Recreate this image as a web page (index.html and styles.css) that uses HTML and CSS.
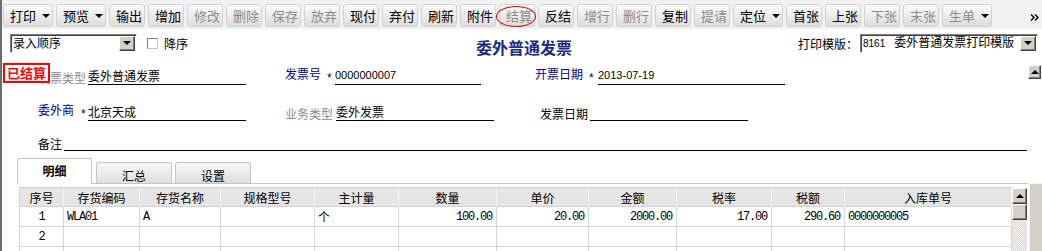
FILE: index.html
```html
<!DOCTYPE html>
<html lang="zh-CN">
<head>
  <meta charset="UTF-8">
  <title>委外普通发票</title>
  <link rel="stylesheet" href="styles.css">
</head>
<body>

<div class="app">
  <div class="toolbar">
    <button class="tb drop">打印<i class="caret"></i></button>
    <button class="tb drop">预览<i class="caret"></i></button>
    <button class="tb">输出</button>
    <button class="tb">增加</button>
    <button class="tb off">修改</button>
    <button class="tb off">删除</button>
    <button class="tb off">保存</button>
    <button class="tb off">放弃</button>
    <button class="tb">现付</button>
    <button class="tb">弃付</button>
    <button class="tb">刷新</button>
    <button class="tb">附件</button>
    <button class="tb off marked">结算</button>
    <button class="tb">反结</button>
    <button class="tb off">增行</button>
    <button class="tb off">删行</button>
    <button class="tb">复制</button>
    <button class="tb off">提请</button>
    <button class="tb drop">定位<i class="caret"></i></button>
    <button class="tb">首张</button>
    <button class="tb">上张</button>
    <button class="tb off">下张</button>
    <button class="tb off">末张</button>
    <button class="tb drop off">生单<i class="caret"></i></button>
    <span class="more">
      <svg width="10" height="7" viewBox="0 0 10 7"><path d="M1 0.5 L4 3.5 L1 6.5 M5 0.5 L8 3.5 L5 6.5" fill="none" stroke="#000" stroke-width="1.4"/></svg>
    </span>
  </div>

  <div class="head-row">
    <div class="head-left">
      <div class="combo combo-sort">
        <span class="combo-text">录入顺序</span>
        <span class="combo-btn"><i class="caret"></i></span>
      </div>
      <label class="chk"><span class="box"></span>降序</label>
    </div>
    <h1 class="title">委外普通发票</h1>
    <div class="head-right">
      <span>打印模版：</span>
      <div class="combo combo-tpl">
        <span class="combo-text"><span class="code">8161</span>委外普通发票打印模版</span>
        <span class="combo-btn"><i class="caret"></i></span>
      </div>
    </div>
  </div>

  <div class="stamp">已结算</div>

  <div class="frow r1">
    <div class="grp g247">
      <span class="lbl gray lw50">发票类型</span>
      <span class="val vw158">委外普通发票</span>
    </div>
    <div class="grp g250">
      <span class="lbl lw50">发票号<i class="star">*</i></span>
      <span class="val vw146 num">0000000007</span>
    </div>
    <div class="grp">
      <span class="lbl lw63">开票日期<i class="star">*</i></span>
      <span class="val vw187 num">2013-07-19</span>
    </div>
    <span class="sbtn up-top"><i class="caret-up"></i></span>
  </div>

  <div class="frow r2">
    <div class="grp g247">
      <span class="lbl lw50">委外商<i class="star star-wide">*</i></span>
      <span class="val vw158">北京天成</span>
    </div>
    <div class="grp g255">
      <span class="lbl gray lw51">业务类型</span>
      <span class="val vw158">委外发票</span>
    </div>
    <div class="grp">
      <span class="lbl plain lw50">发票日期</span>
      <span class="val vw158"></span>
    </div>
  </div>

  <div class="frow r3">
    <div class="grp">
      <span class="lbl plain lw26">备注</span>
      <span class="val vw963"></span>
    </div>
  </div>

  <div class="bottom">
    <div class="main">
      <div class="tabs">
        <span class="tab on">明细</span>
        <span class="tab">汇总</span>
        <span class="tab">设置</span>
      </div>
      <div class="grid-wrap">
        <table class="grid">
          <colgroup>
            <col class="c-no"><col class="c-code"><col class="c-name"><col class="c-spec">
            <col class="c-unit"><col class="c-qty"><col class="c-price"><col class="c-amt">
            <col class="c-rate"><col class="c-tax"><col class="c-in">
          </colgroup>
          <thead>
            <tr>
              <th>序号</th><th>存货编码</th><th>存货名称</th><th>规格型号</th><th>主计量</th>
              <th>数量</th><th>单价</th><th>金额</th><th>税率</th><th>税额</th><th>入库单号</th>
            </tr>
          </thead>
          <tbody>
            <tr>
              <td class="ctr">1</td><td>WLA01</td><td>A</td><td></td><td class="cjk">个</td>
              <td class="rt">100.00</td><td class="rt">20.00</td><td class="rt">2000.00</td>
              <td class="rt">17.00</td><td class="rt">290.60</td><td>0000000005</td>
            </tr>
            <tr>
              <td class="ctr">2</td><td></td><td></td><td></td><td></td>
              <td></td><td></td><td></td><td></td><td></td><td></td>
            </tr>
            <tr>
              <td></td><td></td><td></td><td></td><td></td>
              <td></td><td></td><td></td><td></td><td></td><td></td>
            </tr>
          </tbody>
        </table>
        <div class="vscroll">
          <span class="sbtn vs-up"><i class="caret-up"></i></span>
          <span class="sbtn vs-thumb"></span>
          <span class="vs-track"></span>
        </div>
      </div>
    </div>
    <div class="outer-scroll"></div>
  </div>
</div>

</body>
</html>
```

FILE: styles.css
```css
* {
  box-sizing: border-box;
}

body {
  margin: 0;
  width: 1042px;
  height: 251px;
  overflow: hidden;
  background: #fff;
  font-family: "Noto Sans CJK SC", "Liberation Sans", sans-serif;
  font-size: 12px;
  color: #000;
}

.app {
  position: relative;
  height: 251px;
  overflow: hidden;
  border-left: 2px solid #6e6e6e;
}

/* toolbar */
.toolbar {
  display: flex;
  gap: 3px;
  height: 29px;
  padding: 4px 0 2px 1px;
  background: #f1f1f1;
}

.tb {
  position: relative;
  display: flex;
  align-items: center;
  width: 36px;
  height: 23px;
  padding: 0 0 0 6px;
  font-family: "Noto Sans CJK SC", sans-serif;
  font-size: 13px;
  color: #000;
  background: linear-gradient(#fbfbfb, #e9e9e9 60%, #dcdcdc);
  border: 1px solid #d2d2d2;
  border-radius: 3px;
}

.tb.drop {
  width: 50px;
}

.tb.off {
  color: #8c8c8c;
}

.tb.marked::after {
  content: "";
  position: absolute;
  left: -4px;
  right: -2px;
  top: 1px;
  bottom: -1px;
  border: 1.5px solid #e60000;
  border-radius: 50%;
}

.caret {
  display: inline-block;
  width: 0;
  height: 0;
  border-left: 4px solid transparent;
  border-right: 4px solid transparent;
  border-top: 4px solid #000;
}

.tb .caret {
  margin-left: 6px;
}

.more {
  margin-left: auto;
  margin-right: 2px;
  margin-top: 3px;
  align-self: flex-start;
}

/* header row */
.head-row {
  display: grid;
  grid-template-columns: 1fr auto 1fr;
  align-items: center;
  height: 20px;
  margin-top: 4px;
  padding: 0 4px 0 8px;
}

.head-left {
  display: flex;
  align-items: center;
}

.head-right {
  display: flex;
  align-items: center;
  justify-content: flex-end;
}

.title {
  margin: 0 0 -3px;
  align-self: end;
  font-size: 16px;
  line-height: 18px;
  font-weight: bold;
  color: #1a2b80;
}

.combo {
  display: flex;
  align-items: center;
  height: 19px;
  background: #fff;
  border: 1px solid;
  border-color: #808080 #fff #fff #808080;
  box-shadow: inset 1px 1px #404040;
}

.combo-sort {
  width: 127px;
}

.combo-tpl {
  width: 178px;
  margin-left: 2px;
}

.combo-text {
  flex: 1;
  padding-left: 2px;
  line-height: 16px;
  white-space: nowrap;
  overflow: hidden;
}

.code {
  font-family: "Liberation Sans", sans-serif;
  font-size: 10px;
  margin-right: 9px;
}

.combo-btn,
.sbtn {
  display: flex;
  align-items: center;
  justify-content: center;
  background: #d4d0c8;
  border: 1px solid;
  border-color: #fff #404040 #404040 #fff;
  box-shadow: inset -1px -1px #808080;
}

.combo-btn {
  width: 16px;
  height: 15px;
  margin-right: 1px;
}

.chk {
  display: flex;
  align-items: center;
  margin-left: 10px;
}

.chk .box {
  width: 11px;
  height: 11px;
  margin-right: 6px;
  background: #fff;
  border: 1px solid;
  border-color: #808080 #c8c8c8 #c8c8c8 #808080;
}

/* form */
.stamp {
  position: absolute;
  left: 1px;
  top: 63px;
  width: 47px;
  height: 20px;
  background: #fff;
  border: 2px solid #ff0000;
  color: #ff0000;
  font-size: 13px;
  font-weight: bold;
  line-height: 15px;
  text-align: center;
  z-index: 2;
}

.frow {
  display: flex;
  align-items: flex-end;
  padding-left: 36px;
}

.r1 { height: 32px; }
.r2 { height: 36px; }
.r3 { height: 30px; }

.grp {
  display: flex;
  align-items: flex-end;
}

.g247 { width: 247px; }
.g250 { width: 250px; }
.g255 { width: 255px; }

.lbl {
  line-height: 14px;
  white-space: nowrap;
  color: #000080;
}

.lbl.gray {
  color: #8a8a8a;
}

.lbl.plain {
  color: #000;
}

.lw26 { width: 26px; }
.lw50 { width: 50px; }
.lw51 { width: 51px; }
.lw63 { width: 63px; }

.star {
  font-style: normal;
  font-family: "Liberation Sans", sans-serif;
  margin-left: 6px;
  vertical-align: -3px;
}

.star-wide {
  margin-left: 7px;
}

.val {
  height: 17px;
  line-height: 15px;
  border-bottom: 1px solid #000;
  white-space: nowrap;
}

.val.num {
  font-family: "Liberation Sans", sans-serif;
  font-size: 11px;
}

.vw146 { width: 146px; }
.vw158 { width: 158px; }
.vw187 { width: 187px; }
.vw963 { width: 963px; }

.up-top {
  align-self: flex-start;
  width: 13px;
  height: 14px;
  margin: 12px 1px 0 auto;
}

.caret-up {
  width: 0;
  height: 0;
  border-left: 4px solid transparent;
  border-right: 4px solid transparent;
  border-bottom: 4px solid #000;
}

/* tabs and grid */
.bottom {
  display: flex;
  padding-top: 8px;
}

.main {
  width: 1026px;
}

.tabs {
  display: flex;
  align-items: flex-end;
  gap: 3px;
  height: 25px;
  margin-left: 15px;
  border-bottom: 1px solid #c4c4c4;
}

.tab {
  width: 76px;
  height: 21px;
  padding-top: 6px;
  line-height: 14px;
  text-align: center;
  background: linear-gradient(#f8f8f8, #dedede);
  border: 1px solid #c4c4c4;
  border-bottom: none;
  border-radius: 3px 3px 0 0;
}

.tab.on {
  width: 75px;
  height: 26px;
  margin-right: 1px;
  margin-bottom: -1px;
  padding-top: 5px;
  background: #fff;
  font-weight: bold;
}

.grid-wrap {
  display: flex;
  padding-top: 3px;
  margin-left: 17px;
}

.grid {
  width: 993px;
  table-layout: fixed;
  border-collapse: separate;
  border-spacing: 0;
  border-top: 1px solid #cfcfcf;
  border-left: 1px solid #d4d4d4;
}

.c-no { width: 44px; }
.c-code { width: 76px; }
.c-name { width: 81px; }
.c-spec { width: 94px; }
.c-unit { width: 84px; }
.c-qty { width: 98px; }
.c-price { width: 92px; }
.c-amt { width: 88px; }
.c-rate { width: 95px; }
.c-tax { width: 73px; }
.c-in { width: 167px; }

.grid th {
  height: 19px;
  padding: 0;
  font-weight: normal;
  background: #e5e5e5;
  border-right: 1px solid #f6f6f6;
  border-bottom: 1px solid #d2d2d2;
}

.grid td {
  height: 20px;
  padding: 0 3px;
  font-family: "Liberation Mono", monospace;
  font-size: 12px;
  letter-spacing: -1.2px;
  white-space: nowrap;
  border-right: 1px solid #d6d6d6;
  border-bottom: 1px solid #d6d6d6;
}

.grid td.ctr {
  text-align: center;
}

.grid td.rt {
  text-align: right;
  padding-right: 4px;
}

.grid td.cjk {
  font-family: "Noto Sans CJK SC", sans-serif;
  letter-spacing: 0;
}

.vscroll {
  display: flex;
  flex-direction: column;
  width: 15px;
  margin-top: 1px;
}

.vs-up,
.vs-thumb {
  height: 16px;
}

.vs-track {
  flex: 1;
  background-image: repeating-conic-gradient(#d4d0c8 0 25%, #fff 0 50%);
  background-size: 2px 2px;
}

.outer-scroll {
  width: 13px;
  margin: 24px 0 0 1px;
  background: #d4d0c8;
  border-top: 1px solid #f4f4f4;
  border-left: 1px solid #f4f4f4;
}
```
